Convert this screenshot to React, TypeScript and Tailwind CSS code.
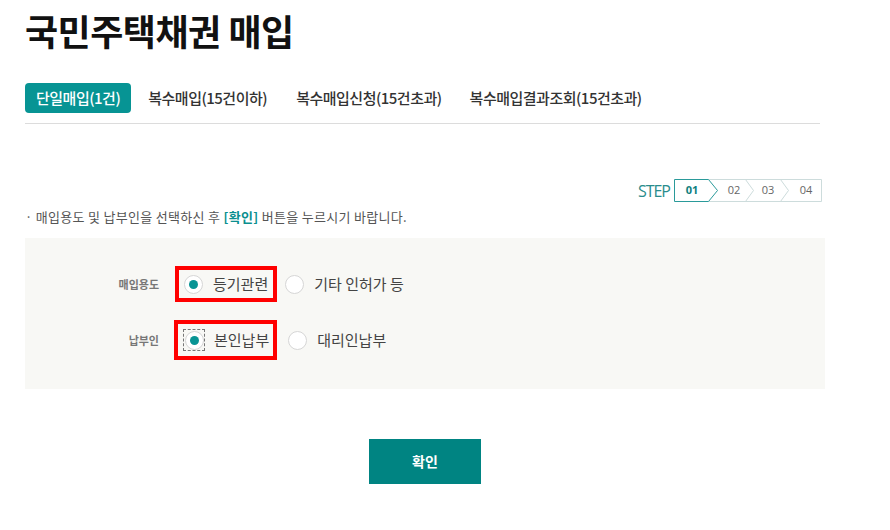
import React from "react";

const KR = { fontFamily: '"Noto Sans CJK KR", "Noto Sans", sans-serif' };

function Radio({ checked, focus }: { checked?: boolean; focus?: boolean }) {
  return (
    <span
      className={
        "flex h-[22px] w-[22px] items-center justify-center " +
        (focus ? "border border-dashed border-[#777]" : "border border-transparent")
      }
    >
      <span className="flex h-[19px] w-[19px] items-center justify-center rounded-full border border-[#d6d6d6] bg-white">
        {checked && <span className="h-[9px] w-[9px] rounded-full bg-[#089494]" />}
      </span>
    </span>
  );
}

function Step() {
  const teal = "#2a9a9a";
  const gray = "#cddcdc";
  return (
    <div className="relative h-[24px] w-[149px]">
      <svg className="absolute left-0 top-0" width="149" height="24" viewBox="0 0 149 24">
        <path d="M34.5 0.5 H147.5 V22.5 H34.5" fill="none" stroke={gray} />
        <path d="M71.5 0.5 L79.5 11.5 L71.5 22.5" fill="none" stroke={gray} />
        <path d="M106.5 0.5 L114.5 11.5 L106.5 22.5" fill="none" stroke={gray} />
        <path d="M34.5 0.5 H0.5 V22.5 H34.5 L43.5 11.5 Z" fill="white" stroke={teal} />
      </svg>
      <span className="absolute left-[8px] top-0 flex h-[23px] w-[20px] items-center justify-center text-[11px] font-bold text-[#0e7f80]" style={{ fontFamily: '"Open Sans", sans-serif' }}>01</span>
      <span className="absolute left-[50px] top-0 flex h-[23px] w-[20px] items-center justify-center text-[11px] text-[#666]" style={{ fontFamily: '"Open Sans", sans-serif' }}>02</span>
      <span className="absolute left-[84px] top-0 flex h-[23px] w-[20px] items-center justify-center text-[11px] text-[#666]" style={{ fontFamily: '"Open Sans", sans-serif' }}>03</span>
      <span className="absolute left-[122px] top-0 flex h-[23px] w-[20px] items-center justify-center text-[11px] text-[#666]" style={{ fontFamily: '"Open Sans", sans-serif' }}>04</span>
    </div>
  );
}

export default function App() {
  return (
    <div className="min-h-[530px] w-[890px] bg-white" style={KR}>
      <div className="w-[800px] pl-[25px] box-content">
        <h1 className="pt-[8px] text-[36px] font-bold leading-[44px] tracking-[-0.5px] text-[#111]">
          국민주택채권 매입
        </h1>

        <div className="mt-[31px] w-[795px] border-b border-[#dcdcdc] pb-[10px]">
          <div className="flex items-center gap-[4px] text-[15px] font-medium tracking-[-0.5px]">
            <span className="flex h-[30px] items-center rounded-[4px] bg-[#079494] px-[11px] text-white">
              단일매입(1건)
            </span>
            <span className="flex h-[30px] items-center px-[13px] text-[#333]">복수매입(15건이하)</span>
            <span className="flex h-[30px] items-center px-[12px] text-[#333]">복수매입신청(15건초과)</span>
            <span className="flex h-[30px] items-center px-[12px] text-[#333]">복수매입결과조회(15건초과)</span>
          </div>
        </div>

        <div className="mt-[55px] flex items-center justify-end gap-[4px] pr-[2px]">
          <span className="text-[16px] tracking-[-1px] text-[#2a8c8c]" style={{ fontFamily: '"Open Sans", sans-serif' }}>
            STEP
          </span>
          <Step />
        </div>

        <p className="mt-[6px] text-[13px] leading-[16px] tracking-[0.3px] text-[#555]">
          · 매입용도 및 납부인을 선택하신 후 <span className="font-bold text-[#0b8f8f]">[확인]</span> 버튼을 누르시기 바랍니다.
        </p>

        <div className="mt-[13px] bg-[#f8f8f5] pb-[31px] pt-[28px]">
          <div className="relative flex h-[36px] items-center">
            <span className="w-[134px] text-right text-[11px] font-bold text-[#777]">매입용도</span>
            <span className="ml-[23px] flex items-center">
              <Radio checked />
              <span className="ml-[9px] text-[15px] text-[#444]">등기관련</span>
            </span>
            <span className="ml-[15px] flex items-center">
              <Radio />
              <span className="ml-[9px] text-[15px] text-[#444]">기타 인허가 등</span>
            </span>
            <span className="pointer-events-none absolute left-[150px] top-[0px] h-[36px] w-[102px] border-[4px] border-[#f00]" />
          </div>
          <div className="relative mt-[20px] flex h-[36px] items-center">
            <span className="w-[134px] text-right text-[11px] font-bold text-[#777]">납부인</span>
            <span className="ml-[24px] flex items-center">
              <Radio checked focus />
              <span className="ml-[9px] text-[15px] text-[#444]">본인납부</span>
            </span>
            <span className="ml-[17px] flex items-center">
              <Radio />
              <span className="ml-[9px] text-[15px] text-[#444]">대리인납부</span>
            </span>
            <span className="pointer-events-none absolute left-[149px] top-[-2px] h-[40px] w-[103px] border-[4px] border-[#f00]" />
          </div>
        </div>

        <div className="mt-[50px] flex justify-center">
          <button className="h-[45px] w-[112px] bg-[#008482] text-[14px] font-bold text-white">확인</button>
        </div>
      </div>
    </div>
  );
}
